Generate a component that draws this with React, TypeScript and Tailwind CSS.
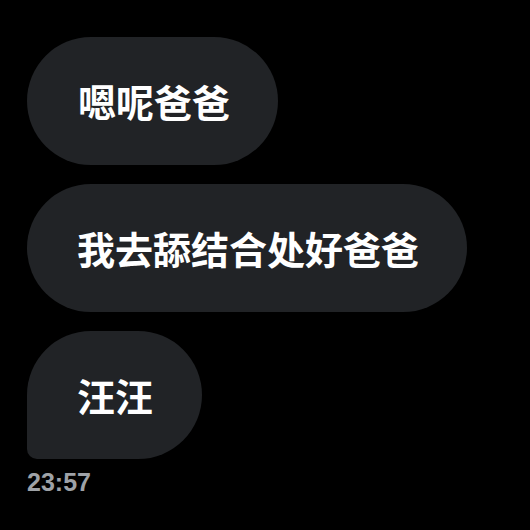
export default function App() {
  const cjk = { fontFamily: '"Noto Sans CJK SC", "Noto Sans", sans-serif' };
  return (
    <div className="w-[530px] h-[530px] bg-black overflow-hidden pt-[37px] pl-[27px]">
      <div className="flex flex-col items-start gap-[19px]">
        <div
          className="h-[128px] flex items-center pl-[51px] pr-[48px] rounded-[64px] bg-[#212326] text-white text-[38px] font-bold leading-none"
          style={cjk}
        >
          嗯呢爸爸
        </div>
        <div
          className="h-[128px] flex items-center pl-[50px] pr-[48px] rounded-[64px] bg-[#212326] text-white text-[38px] font-bold leading-none"
          style={cjk}
        >
          我去舔结合处好爸爸
        </div>
        <div
          className="h-[128px] flex items-center pl-[50px] pr-[49px] rounded-tl-[64px] rounded-tr-[64px] rounded-br-[64px] rounded-bl-[10px] bg-[#212326] text-white text-[38px] font-bold leading-none"
          style={cjk}
        >
          汪汪
        </div>
      </div>
      <div className="mt-[9px] text-[25px] font-bold leading-[28px] text-[#9ea2a7] font-['Liberation_Sans',Arial,sans-serif]">
        23:57
      </div>
    </div>
  );
}
